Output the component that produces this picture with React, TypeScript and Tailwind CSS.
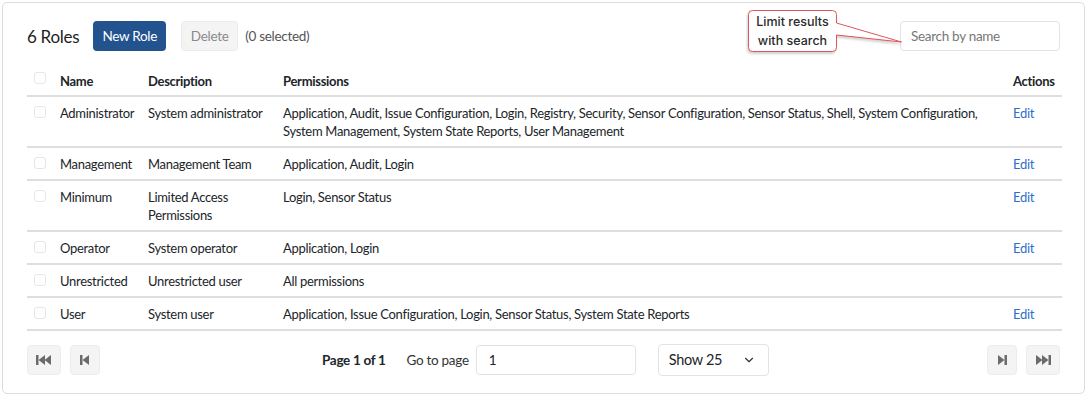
import { ChevronDown } from 'lucide-react'

type Role = {
  name: string
  description: string
  permissions: string
  editable: boolean
}

const roles: Role[] = [
  {
    name: 'Administrator',
    description: 'System administrator',
    permissions:
      'Application, Audit, Issue Configuration, Login, Registry, Security, Sensor Configuration, Sensor Status, Shell, System Configuration, System Management, System State Reports, User Management',
    editable: true,
  },
  { name: 'Management', description: 'Management Team', permissions: 'Application, Audit, Login', editable: true },
  { name: 'Minimum', description: 'Limited Access Permissions', permissions: 'Login, Sensor Status', editable: true },
  { name: 'Operator', description: 'System operator', permissions: 'Application, Login', editable: true },
  { name: 'Unrestricted', description: 'Unrestricted user', permissions: 'All permissions', editable: false },
  {
    name: 'User',
    description: 'System user',
    permissions: 'Application, Issue Configuration, Login, Sensor Status, System State Reports',
    editable: true,
  },
]

function Checkbox() {
  return <span className="block h-[12px] w-[12px] rounded-[3px] border border-[#e6e6e6] bg-white" />
}

function PagerIcon({ kind }: { kind: 'first' | 'prev' | 'next' | 'last' }) {
  const flip = kind === 'next' || kind === 'last'
  const double = kind === 'first' || kind === 'last'
  return (
    <svg width={double ? 16 : 10} height="12" viewBox={double ? '0 0 16 12' : '0 0 10 12'} className={flip ? 'scale-x-[-1]' : ''}>
      <rect x="0" y="1" width="2.5" height="10" fill="#6b6b6b" />
      <path d="M2.5 6 L9 1 L9 11 Z" fill="#6b6b6b" />
      {double && <path d="M8.5 6 L15 1 L15 11 Z" fill="#6b6b6b" />}
    </svg>
  )
}

function PagerButton({ kind, wide }: { kind: 'first' | 'prev' | 'next' | 'last'; wide?: boolean }) {
  return (
    <button
      type="button"
      className={`flex h-[30px] items-center justify-center rounded-[4px] border border-[#ececec] bg-[#f4f4f4] ${wide ? 'w-[34px]' : 'w-[30px]'}`}
    >
      <PagerIcon kind={kind} />
    </button>
  )
}

export default function App() {
  return (
    <div className="h-[396px] w-[1087px] bg-white p-[2px] font-['Lato',sans-serif] tracking-[-0.3px] text-[#212529]">
      <div className="relative h-[392px] rounded-[5px] border border-[#dcdcdc] px-[24px] pt-[18px]">
        {/* toolbar */}
        <div className="flex h-[30px] items-center">
          <h1 className="text-[17px] leading-none text-[#1e1e1e]">6 Roles</h1>
          <button
            type="button"
            className="ml-[14px] h-[30px] w-[73px] rounded-[4px] bg-[#23538f] text-[13.5px] text-white"
          >
            New Role
          </button>
          <button
            type="button"
            className="ml-[15px] h-[30px] w-[57px] rounded-[4px] border border-[#ececec] bg-[#f4f4f4] text-[13.5px] text-[#8a8a8a]"
          >
            Delete
          </button>
          <span className="ml-[7px] text-[13.5px] text-[#555]">(0 selected)</span>
          <input
            readOnly
            placeholder="Search by name"
            className="ml-auto h-[30px] w-[160px] rounded-[4px] border border-[#e3e3e3] px-[10px] text-[13.5px] outline-none placeholder:text-[#777]"
          />
        </div>

        {/* table */}
        <table className="mt-[21px] w-[1035px] table-fixed border-collapse text-left text-[13px] leading-[18px]">
          <colgroup>
            <col className="w-[25px]" />
            <col className="w-[88px]" />
            <col className="w-[135px]" />
            <col />
            <col className="w-[57px]" />
          </colgroup>
          <thead>
            <tr className="border-b-2 border-[#dedede]">
              <th className="px-0 pb-[5px] pl-[7px] align-top">
                <Checkbox />
              </th>
              <th className="px-[8px] pb-[5px] font-bold">Name</th>
              <th className="px-[8px] pb-[5px] font-bold">Description</th>
              <th className="px-[8px] pb-[5px] font-bold">Permissions</th>
              <th className="px-[8px] pb-[5px] font-bold">Actions</th>
            </tr>
          </thead>
          <tbody>
            {roles.map((r) => (
              <tr key={r.name} className="border-b-2 border-[#dedede] align-top">
                <td className="pb-[6px] pl-[7px] pt-[9px]">
                  <Checkbox />
                </td>
                <td className="px-[8px] pb-[6px] pt-[7px]">{r.name}</td>
                <td className="px-[8px] pb-[6px] pt-[7px]">{r.description}</td>
                <td className="px-[8px] pb-[6px] pt-[7px]">{r.permissions}</td>
                <td className="px-[8px] pb-[6px] pt-[7px] text-[#2d6fce]">{r.editable ? 'Edit' : ''}</td>
              </tr>
            ))}
          </tbody>
        </table>

        {/* pager */}
        <div className="mt-[13px] flex items-center">
          <PagerButton kind="first" wide />
          <div className="ml-[9px]">
            <PagerButton kind="prev" />
          </div>
          <span className="ml-[222px] text-[13.5px] font-bold">Page 1 of 1</span>
          <span className="ml-[21px] text-[13.5px] text-[#333]">Go to page</span>
          <input
            readOnly
            value="1"
            className="ml-[7px] h-[30px] w-[160px] rounded-[4px] border border-[#e3e3e3] px-[12px] text-[13.5px] outline-none"
          />
          <div className="ml-[22px] flex h-[32px] w-[111px] items-center justify-between rounded-[4px] border border-[#e3e3e3] pl-[10px] pr-[12px] text-[14.5px]">
            <span>Show 25</span>
            <ChevronDown size={14} strokeWidth={2} className="text-[#333]" />
          </div>
          <div className="ml-auto flex gap-[9px]">
            <PagerButton kind="next" />
            <PagerButton kind="last" wide />
          </div>
        </div>

        {/* callout */}
        <div className="absolute left-[740px] top-[6px] h-[46px] w-[164px] tracking-normal">
          <svg width="164" height="46" viewBox="0 0 164 46" className="absolute left-0 top-0 drop-shadow-[-1px_2px_1px_rgba(0,0,0,0.18)]">
            <path
              d="M9.5 1.5 H89.5 Q93.5 1.5 93.5 5.5 V14 L158.5 33 L93.5 26 V38.5 Q93.5 42.5 89.5 42.5 H9.5 Q5.5 42.5 5.5 38.5 V5.5 Q5.5 1.5 9.5 1.5 Z"
              fill="#fff"
              stroke="#e2545b"
              strokeWidth="1"
            />
          </svg>
          <div className="absolute left-[5px] top-[3px] w-[89px] text-center font-['Inter',sans-serif] text-[12.5px] font-medium leading-[19px] text-[#2a2a2a]">
            Limit results
            <br />
            with search
          </div>
        </div>
      </div>
    </div>
  )
}
